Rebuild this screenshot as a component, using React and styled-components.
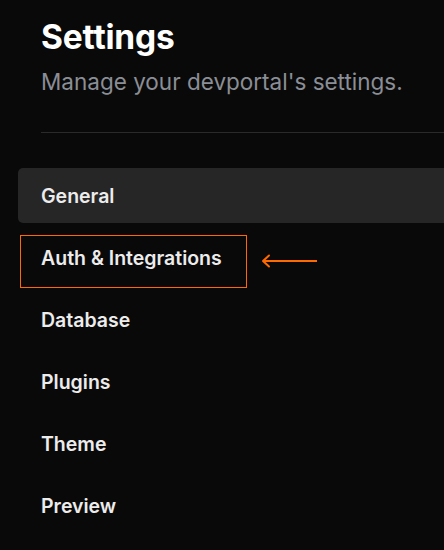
import styled, { createGlobalStyle } from "styled-components";

const GlobalStyle = createGlobalStyle`
    html, body {
        margin: 0;
        padding: 0;
        background: #0a0909;
        overflow: hidden;
    }
    body {
        font-family: Inter, "Noto Sans", sans-serif;
        color: #ededed;
    }
`;

const items = ["General", "Auth & Integrations", "Database", "Plugins", "Theme", "Preview"];

const App = () => {
    return (
        <>
            <GlobalStyle />
            <Page>
                <Header>
                    <Title>Settings</Title>
                    <Subtitle>Manage your devportal's settings.</Subtitle>
                </Header>
                <Divider />
                <Nav>
                    {items.map((item, i) => (
                        <NavItem key={item} $active={i === 0}>
                            {item}
                            {i === 1 && (
                                <>
                                    <Highlight />
                                    <Arrow width="60" height="14" viewBox="0 0 60 14">
                                        <path d="M4 7 H58" stroke="#ff6a00" strokeWidth="2" fill="none" />
                                        <path d="M10 1.5 L4 7 L10 12.5" stroke="#ff6a00" strokeWidth="2" fill="none" strokeLinecap="round" strokeLinejoin="round" />
                                    </Arrow>
                                </>
                            )}
                        </NavItem>
                    ))}
                </Nav>
            </Page>
        </>
    );
};

export default App;

const Page = styled.div`
    width: 444px;
    padding: 17px 0 0 18px;
    box-sizing: border-box;
`;

const Header = styled.div`
    display: flex;
    flex-direction: column;
    row-gap: 11px;
    padding-left: 23px;
`;

const Title = styled.h1`
    margin: 0;
    font-size: 33.5px;
    line-height: 40px;
    font-weight: 700;
    color: #ffffff;
    letter-spacing: -0.2px;
`;

const Subtitle = styled.p`
    margin: 0;
    font-size: 22.5px;
    line-height: 28px;
    color: #8a8e96;
    white-space: nowrap;
`;

const Divider = styled.div`
    margin: 36px 0 35px 23px;
    height: 1px;
    background-color: #2a2a2a;
`;

const Nav = styled.nav`
    display: flex;
    flex-direction: column;
    row-gap: 7px;
`;

const NavItem = styled.div`
    position: relative;
    display: flex;
    align-items: center;
    height: 55px;
    padding-left: 23px;
    border-radius: 5px 0 0 5px;
    background-color: ${(p) => (p.$active ? "#262626" : "transparent")};
    font-size: 19.5px;
    font-weight: 600;
    color: #ececec;
`;

const Highlight = styled.span`
    position: absolute;
    left: 2px;
    top: 5px;
    width: 227px;
    height: 53px;
    border: 1px solid #ff6a00;
    box-sizing: border-box;
`;

const Arrow = styled.svg`
    position: absolute;
    left: 241px;
    top: 24px;
`;
